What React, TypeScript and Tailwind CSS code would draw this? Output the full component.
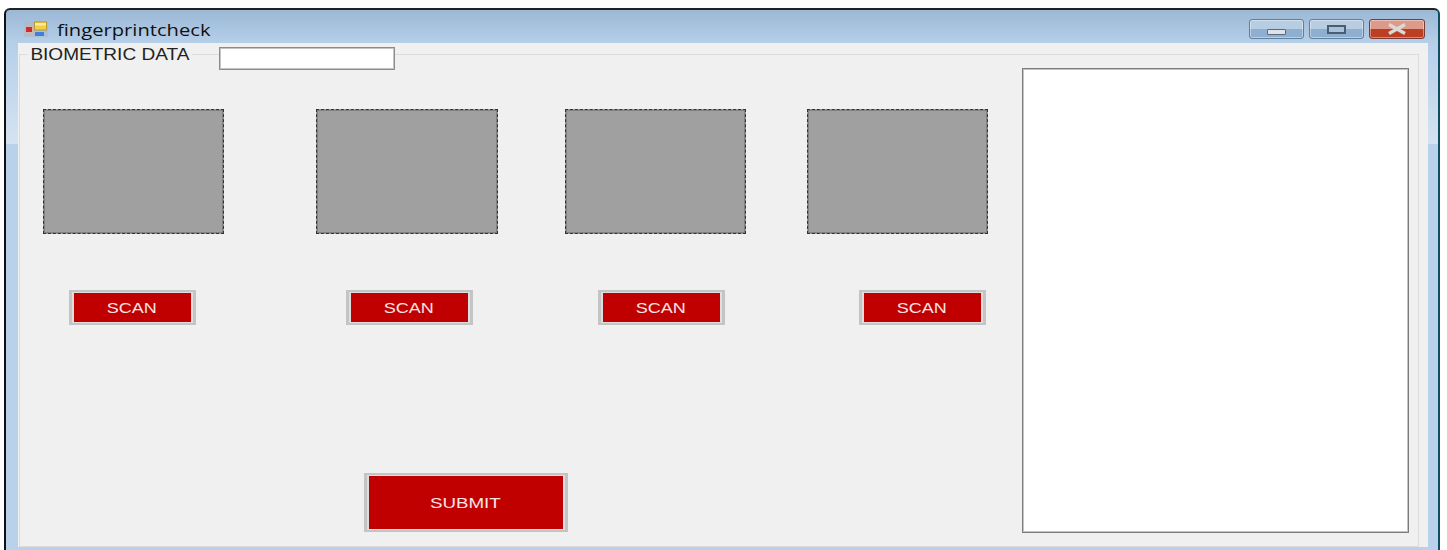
const FormIcon = () => (
  <svg width="24" height="16" viewBox="0 0 24 16" className="shrink-0">
    <rect x="0" y="0" width="24" height="16" fill="#aab9ca" opacity="0.6" />
    <rect x="1" y="5" width="8" height="7" fill="#d8b4a8" />
    <rect x="2" y="6" width="6" height="5" fill="#d02a2e" />
    <rect x="10" y="0.5" width="13" height="9" fill="#b89a3a" />
    <rect x="11" y="1.5" width="11" height="7" fill="#f4cf3e" />
    <rect x="11" y="2" width="11" height="2.5" fill="#fdeb9a" />
    <rect x="11" y="11" width="9" height="4" fill="#3f7fd9" />
  </svg>
);

const CaptionButton = ({ className, children }: { className: string; children: React.ReactNode }) => (
  <div className={`flex h-5 items-center justify-center rounded-[3px] border border-[#5f7f9f] shadow-[inset_0_0_0_1px_rgba(255,255,255,0.4)] ${className}`}>
    {children}
  </div>
);

function Picture({ className }: { className: string }) {
  return <div className={`h-[125px] w-[181px] border border-dashed border-[#333] bg-[#a0a0a0] shadow-[inset_0_0_0_1px_rgba(60,60,60,0.3)] ${className}`} />;
}

function RedButton({ label, className, stretch }: { label: string; className: string; stretch: string }) {
  return (
    <button className={`border-x-[3px] border-y-2 border-[#c4c4c4] bg-[#dedede] px-[2px] py-px ${className}`}>
      <span className="flex h-full w-full items-center justify-center bg-[#c00000] text-[#f8e4e4]">
        <span className={`mr-[2px] text-[15px] leading-none ${stretch}`}>{label}</span>
      </span>
    </button>
  );
}

export default function App() {
  return (
    <div className="h-[550px] w-[1447px] overflow-hidden bg-white pl-1 pt-2 font-['Liberation_Sans',sans-serif]">
      {/* frame gradient runs down both side strips and stops at the glass highlight */}
      <div className="h-[542px] w-[1436px] rounded-t-[6px] border-x-2 border-t-2 border-l-[#111] border-r-[#0d4f60] border-t-[#222] bg-[linear-gradient(#9bb8d5_0,#b6cfe9_33px,#d4e3f1_134px,#b9d1ea_134px)]">
        {/* title bar */}
        <div className="flex h-[33px] items-center justify-between pl-[18px] pr-[13px] pt-[5px]">
          <div className="flex items-center gap-[9px]">
            <FormIcon />
            <span className="mt-px origin-left scale-x-[1.26] font-['Open_Sans',sans-serif] text-[16px] leading-none text-[#111]">fingerprintcheck</span>
          </div>
          <div className="flex gap-[5px]">
            <CaptionButton className="w-[55px] bg-[linear-gradient(#b7cde2_50%,#8eafcf_50%)]">
              <div className="mt-[5px] h-[6px] w-[19px] rounded-[1px] border border-[#5a6a7c] bg-[#dfe3e8]" />
            </CaptionButton>
            <CaptionButton className="w-[55px] bg-[linear-gradient(#b7cde2_50%,#8eafcf_50%)]">
              <div className="h-[9px] w-[19px] border-2 border-[#4d5c6e] bg-[#a8c2da]" />
            </CaptionButton>
            <CaptionButton className="w-[56px] border-[#7c3a34] bg-[linear-gradient(#dc9a8a_50%,#bc3f24_50%)]">
              <svg width="22" height="12" viewBox="0 0 22 12">
                <path d="M3 1.5 L19 10.5 M19 1.5 L3 10.5" stroke="#dcd8d4" strokeWidth="3.4" />
              </svg>
            </CaptionButton>
          </div>
        </div>

        {/* client area */}
        <div className="ml-3 h-[504px] w-[1410px] bg-[#f0f0f0] pl-px pt-[11px]">
          <div className="relative flex h-[493px] w-[1400px] border border-[#dcdcdc]">
            <span className="absolute left-[8px] top-[-8px] origin-left scale-x-[1.19] bg-[#f0f0f0] px-[2px] text-[16px] leading-4 text-[#222]">
              BIOMETRIC DATA
            </span>
            <input className="absolute left-[199px] top-[-8px] h-[23px] w-[176px] border border-[#8c8c8c] bg-white shadow-[inset_0_0_0_1px_#c4c4c4]" />

            <div className="flex w-[1002px] shrink-0 flex-col pl-[23px] pt-[54px]">
              <div className="flex">
                <Picture className="" />
                <Picture className="ml-[92px] !w-[182px]" />
                <Picture className="ml-[67px]" />
                <Picture className="ml-[61px]" />
              </div>
              <div className="ml-[26px] mt-[56px] flex">
                <RedButton label="SCAN" stretch="scale-x-[1.2]" className="h-[35px] w-[127px]" />
                <RedButton label="SCAN" stretch="scale-x-[1.2]" className="ml-[150px] h-[35px] w-[127px]" />
                <RedButton label="SCAN" stretch="scale-x-[1.2]" className="ml-[125px] h-[35px] w-[127px]" />
                <RedButton label="SCAN" stretch="scale-x-[1.2]" className="ml-[134px] h-[35px] w-[127px]" />
              </div>
              <RedButton label="SUBMIT" stretch="scale-x-[1.25]" className="ml-[321px] mt-[148px] h-[59px] w-[204px]" />
            </div>

            <div className="pt-[13px]">
              <textarea className="block h-[465px] w-[387px] resize-none border border-[#7c7c7c] bg-white shadow-[inset_0_0_0_1px_#c4c4c4]" />
            </div>
          </div>
        </div>
      </div>
    </div>
  );
}
